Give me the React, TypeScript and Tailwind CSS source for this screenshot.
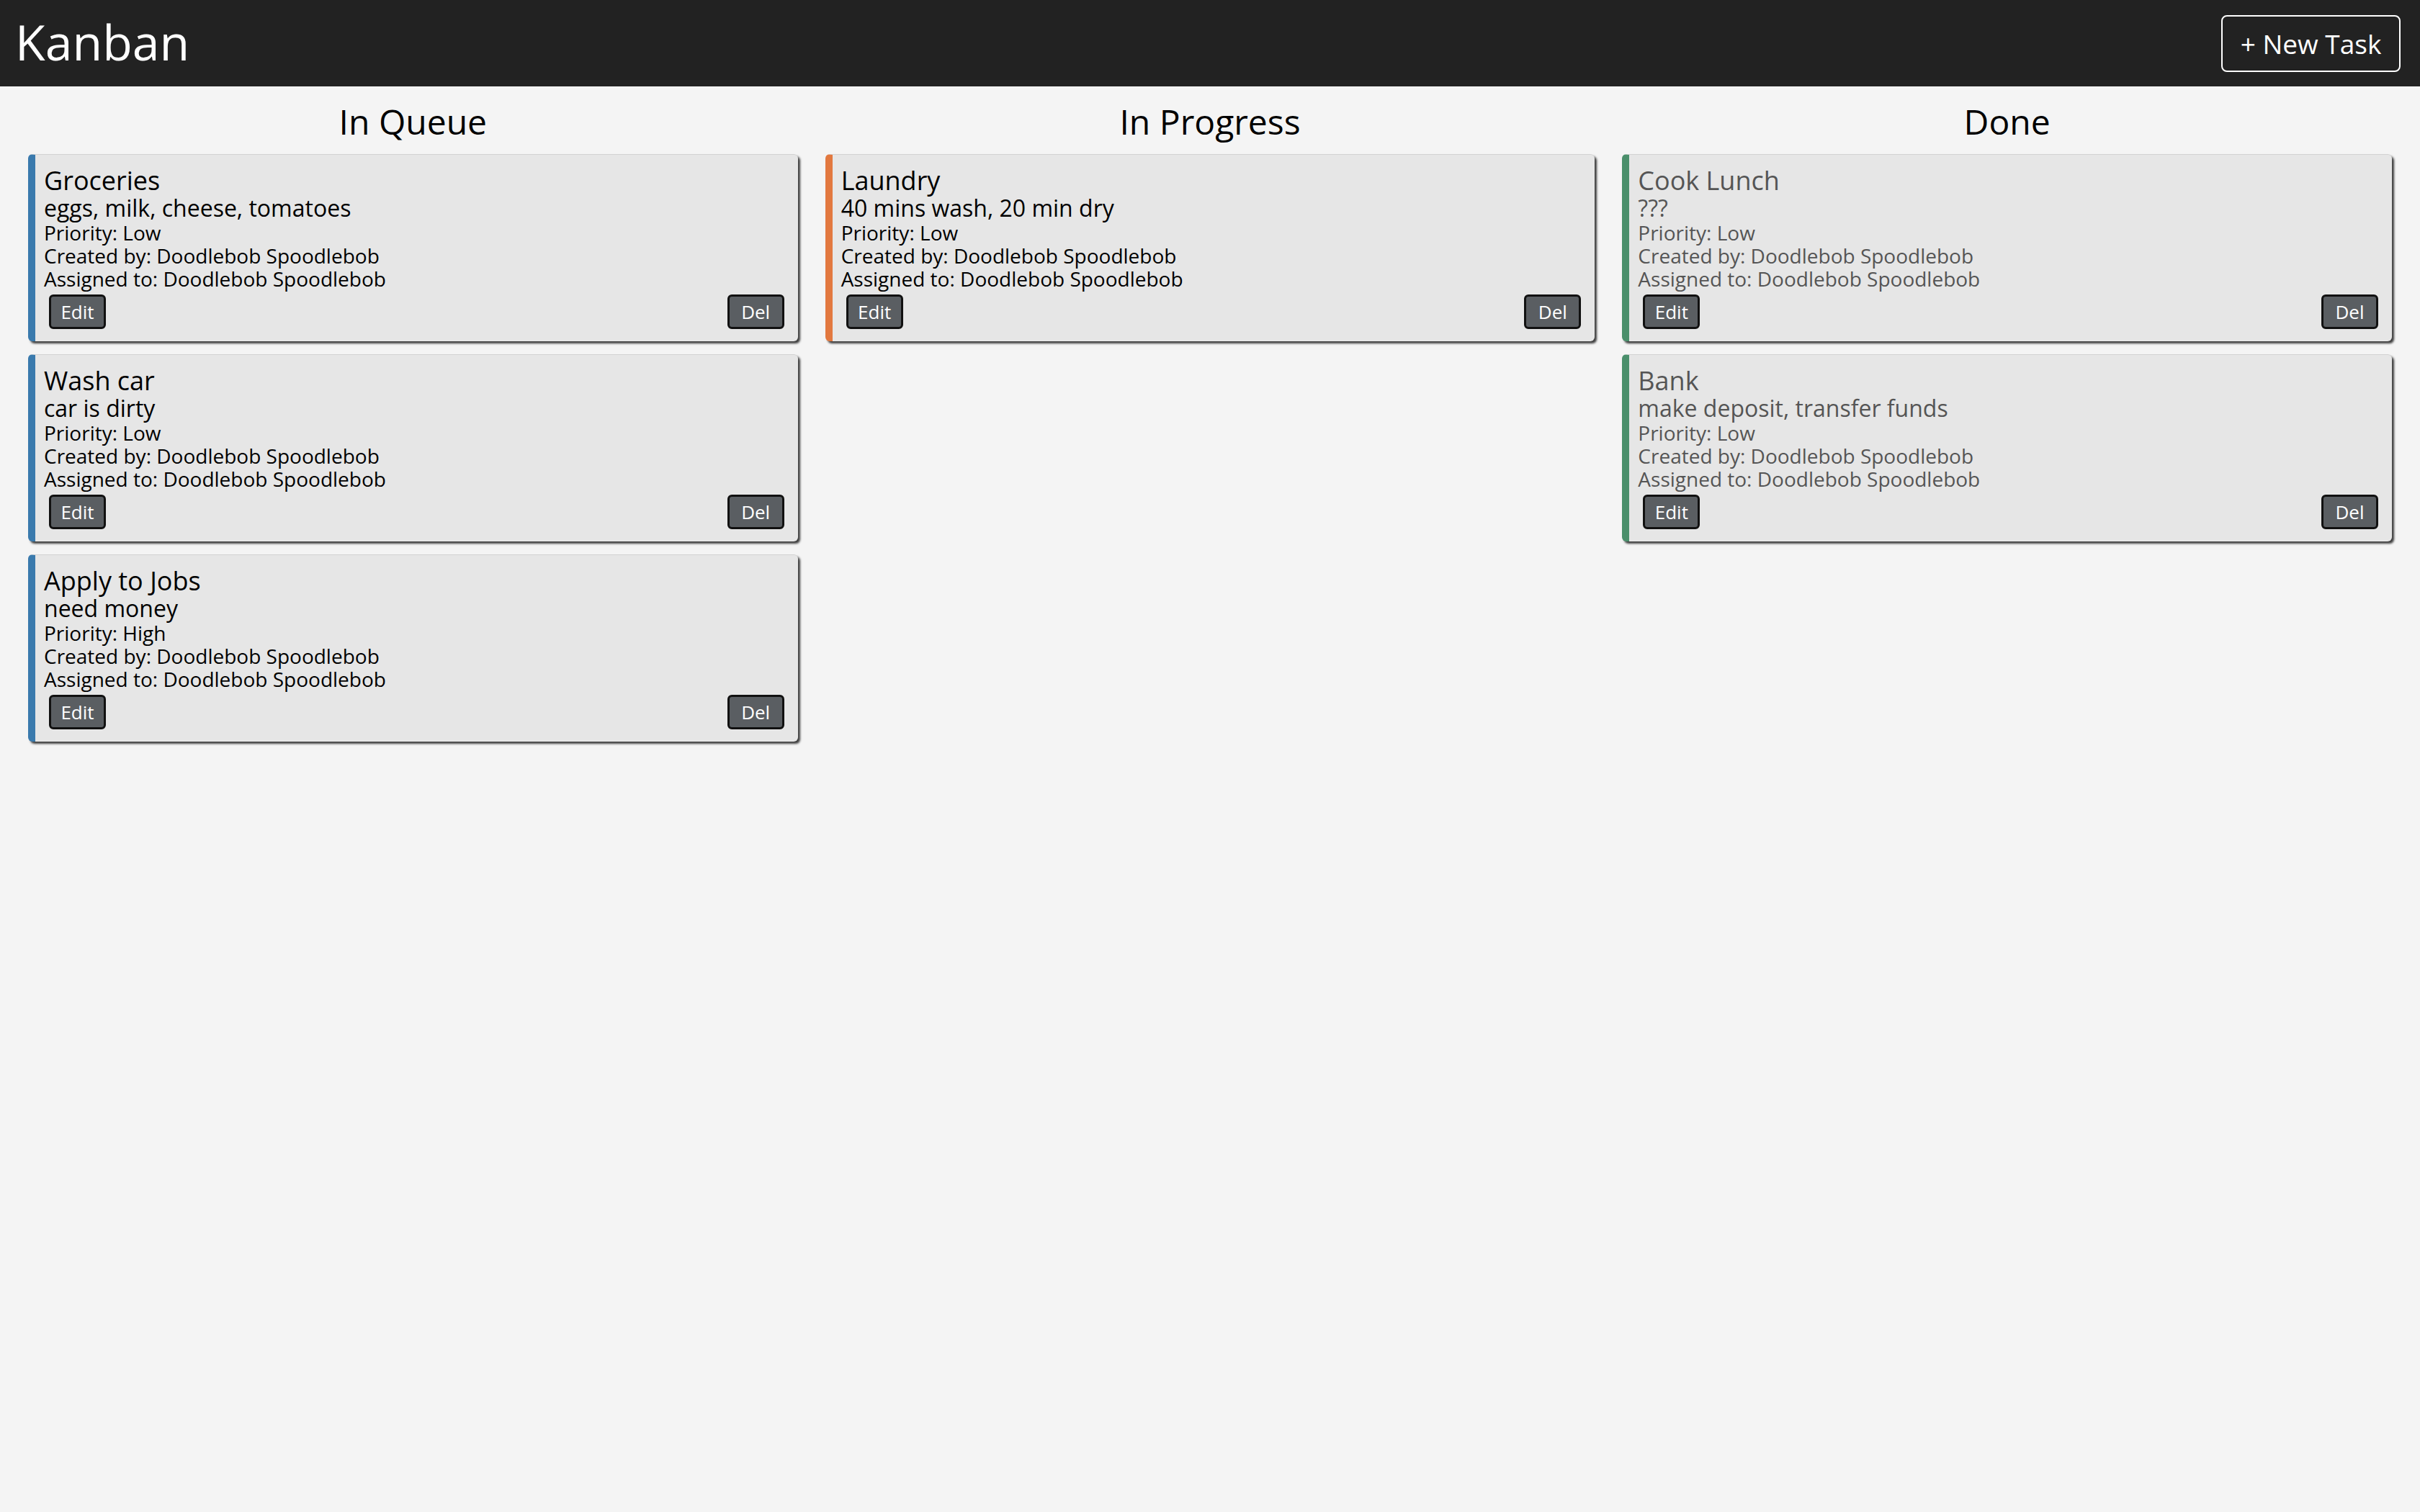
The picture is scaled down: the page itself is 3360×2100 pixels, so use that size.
import React from "react";

type Task = {
  title: string;
  desc: string;
  priority: string;
};

const columns: { name: string; color: string; done?: boolean; tasks: Task[] }[] = [
  {
    name: "In Queue",
    color: "border-l-[#3a7aad]",
    tasks: [
      { title: "Groceries", desc: "eggs, milk, cheese, tomatoes", priority: "Low" },
      { title: "Wash car", desc: "car is dirty", priority: "Low" },
      { title: "Apply to Jobs", desc: "need money", priority: "High" },
    ],
  },
  {
    name: "In Progress",
    color: "border-l-[#e2783f]",
    tasks: [{ title: "Laundry", desc: "40 mins wash, 20 min dry", priority: "Low" }],
  },
  {
    name: "Done",
    color: "border-l-[#4a8f6b]",
    done: true,
    tasks: [
      { title: "Cook Lunch", desc: "???", priority: "Low" },
      { title: "Bank", desc: "make deposit, transfer funds", priority: "Low" },
    ],
  },
];

function Card({ task, color, done }: { task: Task; color: string; done?: boolean }) {
  return (
    <div
      className={`rounded-[6px] bg-[#e6e6e6] border-l-[10px] ${color} border-t border-t-[#d2d2d2] shadow-[3px_3px_3px_rgba(0,0,0,0.75)] pl-[12px] pr-[19px] pt-[16px] pb-[17px]`}
    >
      <div className={done ? "text-[#555]" : "text-black"}>
        <div className="text-[36px] leading-[40px]">{task.title}</div>
        <div className="text-[32px] leading-[36px]">{task.desc}</div>
        <div className="text-[28px] leading-[32px]">Priority: {task.priority}</div>
        <div className="text-[28px] leading-[32px]">Created by: Doodlebob Spoodlebob</div>
        <div className="text-[28px] leading-[32px]">Assigned to: Doodlebob Spoodlebob</div>
      </div>
      <div className="flex justify-between mt-[6px] pl-[7px]">
        <button className="h-[48px] w-[79px] rounded-[6px] border-[3px] border-[#111] bg-[#5a5e62] text-white text-[26px] leading-none">
          Edit
        </button>
        <button className="h-[48px] w-[79px] rounded-[6px] border-[3px] border-[#111] bg-[#5a5e62] text-white text-[26px] leading-none">
          Del
        </button>
      </div>
    </div>
  );
}

export default function App() {
  return (
    <div className="min-h-screen w-full bg-[#f4f4f4] font-['Open_Sans',sans-serif]">
      <header className="h-[120px] bg-[#222222] flex items-center justify-between pl-[21px] pr-[27px]">
        <div className="text-white text-[68px] leading-none pb-[4px]">Kanban</div>
        <button className="w-[249px] h-[79px] rounded-[8px] border-2 border-white text-white text-[37px] leading-none">
          + New Task
        </button>
      </header>
      <main className="grid grid-cols-3 gap-x-[38px] px-[39px]">
        {columns.map((col) => (
          <section key={col.name} className="flex flex-col">
            <h2 className="text-center text-[48px] leading-[56px] mt-[21px] mb-[17px] text-black">{col.name}</h2>
            <div className="flex flex-col gap-[18px]">
              {col.tasks.map((t) => (
                <Card key={t.title} task={t} color={col.color} done={col.done} />
              ))}
            </div>
          </section>
        ))}
      </main>
    </div>
  );
}
